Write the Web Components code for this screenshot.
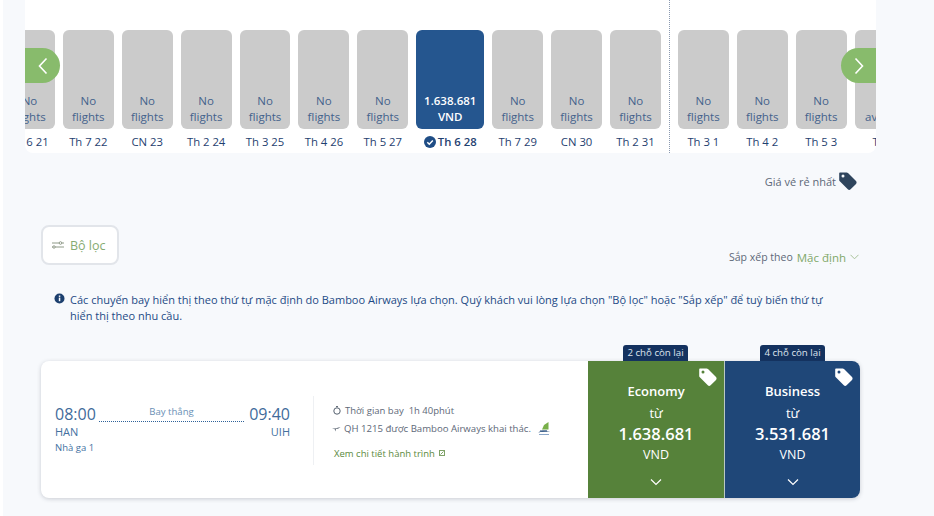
<!DOCTYPE html>
<html lang="vi">
<head>
<meta charset="utf-8">
<title>Chọn chuyến bay</title>
<style>
  html, body { margin: 0; padding: 0; height: 516px; overflow: hidden; background: #fff; }
  body { font-family: "Open Sans", "Liberation Sans", sans-serif; }
  flight-page { height: 516px; }
</style>
</head>
<body>
<flight-page>
  <flight-calendar>
    <date-cell slot="before" label="No flights" date="Th 6 21"></date-cell>
    <date-cell slot="before" label="No flights" date="Th 7 22"></date-cell>
    <date-cell slot="before" label="No flights" date="CN 23"></date-cell>
    <date-cell slot="before" label="No flights" date="Th 2 24"></date-cell>
    <date-cell slot="before" label="No flights" date="Th 3 25"></date-cell>
    <date-cell slot="before" label="No flights" date="Th 4 26"></date-cell>
    <date-cell slot="before" label="No flights" date="Th 5 27"></date-cell>
    <date-cell slot="before" label="1.638.681 VND" date="Th 6 28" selected></date-cell>
    <date-cell slot="before" label="No flights" date="Th 7 29"></date-cell>
    <date-cell slot="before" label="No flights" date="CN 30"></date-cell>
    <date-cell slot="before" label="No flights" date="Th 2 31"></date-cell>
    <date-cell slot="after" label="No flights" date="Th 3 1"></date-cell>
    <date-cell slot="after" label="No flights" date="Th 4 2"></date-cell>
    <date-cell slot="after" label="No flights" date="Th 5 3"></date-cell>
    <date-cell slot="after" label="Not available" date="Th 6 4" wide></date-cell>
  </flight-calendar>
  <cheapest-legend></cheapest-legend>
  <filter-bar></filter-bar>
  <info-note>Các chuyến bay hiển thị theo thứ tự mặc định do Bamboo Airways lựa chọn. Quý khách vui lòng lựa chọn "Bộ lọc" hoặc "Sắp xếp" để tuỳ biến thứ tự hiển thị theo nhu cầu.</info-note>
  <flight-card>
    <fare-box name="Economy" price="1.638.681" seats="2 chỗ còn lại" color="#56823a"></fare-box>
    <fare-box name="Business" price="3.531.681" seats="4 chỗ còn lại" color="#1f4778" last></fare-box>
  </flight-card>
</flight-page>

<script>
const TAG_PATH = "M2 1.5h6.6c.5 0 1 .2 1.4.6l8 8c.8.8.8 2 0 2.8l-5.4 5.4c-.8.8-2 .8-2.8 0l-8-8c-.4-.4-.6-.9-.6-1.4V2.500c0-.6.4-1 1-1zM5 3.600a1.500 1.500 0 1 0 0 3 1.500 1.500 0 0 0 0-3z";

class FlightPage extends HTMLElement {
  constructor() {
    super();
    this.attachShadow({ mode: "open" }).innerHTML = `
      <style>
        :host { display: flex; flex-direction: column; margin-left: 3px; background: #f7f9fc; overflow: hidden; }
      </style>
      <slot></slot>`;
  }
}

class DateCell extends HTMLElement {
  constructor() {
    super();
    this.attachShadow({ mode: "open" });
  }
  connectedCallback() {
    const selected = this.hasAttribute("selected");
    const wide = selected || this.hasAttribute("wide");
    const check = selected ? `<svg width="12" height="12" viewBox="0 0 12 12"><circle cx="6" cy="6" r="6" fill="#1f4d85"/><path d="M3.300 6.200l2 2 3.500-3.700" fill="none" stroke="#fff" stroke-width="1.500"/></svg>` : "";
    this.shadowRoot.innerHTML = `
      <style>
        :host { display: flex; flex-direction: column; flex: none; width: ${wide ? 68 : 50.9}px; }
        .box {
          height: 99px; box-sizing: border-box; padding: 0 0 4px; border-radius: 6px;
          background: ${selected ? "#25568f" : "#cbcbcb"};
          color: ${selected ? "#fff" : "#44628c"};
          font-weight: ${selected ? 600 : 400};
          font-size: 11.500px; line-height: 16px; text-align: center;
          display: flex; align-items: flex-end; justify-content: center;
        }
        .date {
          margin-top: 4px; height: 17px; font-size: 11.300px; line-height: 17px; color: #1f4170;
          white-space: nowrap; display: flex; justify-content: center; align-items: center; gap: 2px;
          font-weight: ${selected ? 600 : 400};
        }
      </style>
      <div class="box"><span>${this.getAttribute("label")}</span></div>
      <div class="date">${check}<span>${this.getAttribute("date")}</span></div>`;
  }
}

class FlightCalendar extends HTMLElement {
  constructor() {
    super();
    this.attachShadow({ mode: "open" }).innerHTML = `
      <style>
        :host { display: block; position: relative; width: 851px; height: 153px; margin-left: 22px; background: #fff; border-radius: 0 0 8px 8px; overflow: hidden; box-sizing: border-box; padding-top: 30px; }
        .row { display: flex; margin-left: -21px; height: 123px; }
        .group { display: flex; gap: 8px; flex: none; }
        .divider { flex: none; width: 0; margin: -30px 8px 0 8px; border-left: 1px dotted #8a99b0; height: 153px; }
        .nav {
          position: absolute; top: 48px; width: 35px; height: 35px; background: #88bb6c;
          display: flex; align-items: center; justify-content: center;
        }
        .prev { left: 0; border-radius: 0 18px 18px 0; }
        .next { right: 0; border-radius: 18px 0 0 18px; }
      </style>
      <div class="row">
        <div class="group"><slot name="before"></slot></div>
        <div class="divider"></div>
        <div class="group"><slot name="after"></slot></div>
      </div>
      <div class="nav prev"><svg width="12" height="18" viewBox="0 0 12 18"><path d="M9.500 1.500L2.500 9l7 7.500" fill="none" stroke="#fff" stroke-width="1.600"/></svg></div>
      <div class="nav next"><svg width="12" height="18" viewBox="0 0 12 18"><path d="M2.500 1.500L9.500 9l-7 7.500" fill="none" stroke="#fff" stroke-width="1.600"/></svg></div>`;
  }
}

class CheapestLegend extends HTMLElement {
  constructor() {
    super();
    this.attachShadow({ mode: "open" }).innerHTML = `
      <style>
        :host { display: flex; justify-content: flex-end; align-items: center; gap: 2px; height: 20px; margin: 18px 76px 0 0; font-size: 11px; color: #5d6878; }
        svg { display: block; }
      </style>
      <span>Giá vé rẻ nhất</span>
      <svg width="20" height="20" viewBox="0 0 20 20"><path fill="#2e445c" fill-rule="evenodd" d="${TAG_PATH}"/></svg>`;
  }
}

class FilterBar extends HTMLElement {
  constructor() {
    super();
    this.attachShadow({ mode: "open" }).innerHTML = `
      <style>
        :host { display: flex; justify-content: space-between; align-items: flex-end; margin: 34px 75px 0 38px; }
        .btn {
          width: 78px; height: 40px; box-sizing: border-box; border: 2px solid #e2e5ea; border-radius: 8px; background: #fff;
          display: flex; align-items: center; gap: 6px; padding-left: 9px; color: #86ab72; font-size: 12.500px;
        }
        .sort { display: flex; align-items: center; height: 16px; font-size: 10.500px; color: #5d6878; gap: 4px; }
        .sort b { font-weight: 400; color: #7fa868; font-size: 11.500px; }
      </style>
      <div class="btn">
        <svg width="12" height="8" viewBox="0 0 12 8"><g fill="none" stroke="#8f9a88"><path d="M0 2h7M10 2h2M3 6h9M0 6h1"/><circle cx="8.500" cy="2" r="1.300"/><circle cx="2" cy="6" r="1.200"/></g></svg>
        <span>Bộ lọc</span>
      </div>
      <div class="sort">
        <span>Sắp xếp theo</span><b>Mặc định</b>
        <svg width="9" height="6" viewBox="0 0 9 6"><path d="M.5 .8l4 4 4-4" fill="none" stroke="#a9c39a"/></svg>
      </div>`;
  }
}

class InfoNote extends HTMLElement {
  constructor() {
    super();
    this.attachShadow({ mode: "open" }).innerHTML = `
      <style>
        :host { display: flex; gap: 5px; margin: 27px 0 0 51px; width: 782px; font-size: 11px; line-height: 16px; color: #1d4a85; font-weight: 500; }
        svg { flex: none; margin-top: 1px; }
      </style>
      <svg width="11" height="11" viewBox="0 0 11 11"><circle cx="5.500" cy="5.500" r="5" fill="#1c3f6e"/><rect x="4.800" y="4.600" width="1.500" height="3.600" fill="#fff"/><rect x="4.800" y="2.500" width="1.500" height="1.400" fill="#fff"/></svg>
      <span><slot></slot></span>`;
  }
}

class FareBox extends HTMLElement {
  constructor() {
    super();
    this.attachShadow({ mode: "open" });
  }
  connectedCallback() {
    const last = this.hasAttribute("last");
    this.shadowRoot.innerHTML = `
      <style>
        :host {
          display: flex; flex-direction: column; align-items: center; position: relative; flex: none; width: 136px; box-sizing: border-box;
          background: ${this.getAttribute("color")}; color: #fff; padding-top: 20px;
          border-radius: ${last ? "0 8px 8px 0" : "0"};
          ${last ? "border-left: 1px solid #b9c8c4;" : ""}
        }
        .seats {
          position: absolute; top: -16px; left: 35px; width: 65px; height: 16px; box-sizing: border-box; border-radius: 3px 3px 0 0;
          background: #14325f; font-size: 9.700px; line-height: 16px; text-align: center; white-space: nowrap; color: #dfe5ee;
        }
        .tag { position: absolute; top: 6px; right: 6px; }
        .name { font-size: 13px; line-height: 20px; font-weight: 600; }
        .from { font-size: 13px; line-height: 18px; margin-top: 3px; }
        .price { font-size: 16.500px; line-height: 24px; font-weight: 600; margin-top: 0; }
        .cur { font-size: 12.500px; line-height: 18px; margin-top: 0; }
        svg.down { margin-top: 14px; }
      </style>
      <div class="seats">${this.getAttribute("seats")}</div>
      <svg class="tag" width="20" height="20" viewBox="0 0 20 20"><path fill="#fff" fill-rule="evenodd" d="${TAG_PATH}"/></svg>
      <div class="name">${this.getAttribute("name")}</div>
      <div class="from">từ</div>
      <div class="price">${this.getAttribute("price")}</div>
      <div class="cur">VND</div>
      <svg class="down" width="12" height="8" viewBox="0 0 12 8"><path d="M1 1.500l5 5 5-5" fill="none" stroke="#fff" stroke-width="1.200"/></svg>`;
  }
}

class FlightCard extends HTMLElement {
  constructor() {
    super();
    this.attachShadow({ mode: "open" }).innerHTML = `
      <style>
        :host {
          display: flex; width: 819px; height: 137px; margin: 37px 0 0 38px; background: #fff; border-radius: 8px;
          box-shadow: 0 1px 4px rgba(40,50,70,.22);
        }
        .route { flex: none; width: 235px; margin-left: 14px; padding-top: 41px; box-sizing: border-box; color: #44719f; }
        .times { display: flex; align-items: flex-end; gap: 3px; }
        .time { font-size: 16px; line-height: 24px; color: #3f6b9b; }
        .line { flex: 1; border-bottom: 1px dotted #2f6299; font-size: 9.600px; line-height: 12px; text-align: center; color: #6a8fb5; padding-bottom: 3px; margin: 0 2px 4px 0; }
        .codes { display: flex; justify-content: space-between; font-size: 11px; line-height: 14px; margin-top: -1px; }
        .term { font-size: 9.500px; line-height: 16px; margin-top: 1px; }
        .detail {
          flex: none; width: 275px; margin: 35px 0 0 23px; height: 69px; box-sizing: border-box; border-left: 1px solid #eef0f3; padding: 5px 0 0 19px;
          font-size: 9.500px; color: #5d6878;
        }
        .detail div { display: flex; align-items: center; white-space: nowrap; }
        .dur { height: 18px; gap: 4px; }
        .no { height: 19px; gap: 3px; margin-left: -1px; font-size: 9.600px; }
        .more { margin: 5px 0 0 1px; height: 20px; gap: 4px; color: #5c8a40; font-weight: 500; }
        .fares { display: flex; flex: none; margin-left: auto; }
      </style>
      <div class="route">
        <div class="times">
          <span class="time">08:00</span>
          <span class="line">Bay thẳng</span>
          <span class="time">09:40</span>
        </div>
        <div class="codes"><span>HAN</span><span>UIH</span></div>
        <div class="term">Nhà ga 1</div>
      </div>
      <div class="detail">
        <div class="dur">
          <svg width="8" height="9" viewBox="0 0 8 9"><circle cx="4" cy="5" r="3.200" fill="none" stroke="#55606e"/><path d="M3 .6h2" stroke="#55606e"/></svg>
          <span>Thời gian bay&nbsp; 1h 40phút</span>
        </div>
        <div class="no">
          <svg width="9" height="7" viewBox="0 0 9 7"><path d="M0 3.200l3 .3L8.500 2 6 3.800H4L3.300 6.500 2.800 4.200z" fill="#55606e"/></svg>
          <span>QH 1215 được Bamboo Airways khai thác.</span>
          <svg style="margin-left:3px" width="14" height="14" viewBox="0 0 14 14"><path d="M11.500 0L7 3 5 7.500h6.500z" fill="#79b04a"/><path d="M1 10.500c3-2.200 9-2.400 12-.5-4-.7-8-.5-12 .5z" fill="#1f4778"/><path d="M3 8.500h7v1H3z" fill="#1f4778"/><path d="M2 12.500h10" stroke="#8aa6c8" stroke-width="1"/></svg>
        </div>
        <div class="more">
          <span>Xem chi tiết hành trình</span>
          <svg width="6" height="6" viewBox="0 0 6 6"><rect x=".5" y=".5" width="5" height="5" fill="none" stroke="#7fa268"/><path d="M1.500 4.500l3-3" stroke="#7fa268"/></svg>
        </div>
      </div>
      <div class="fares"><slot></slot></div>`;
  }
}

customElements.define("flight-page", FlightPage);
customElements.define("date-cell", DateCell);
customElements.define("flight-calendar", FlightCalendar);
customElements.define("cheapest-legend", CheapestLegend);
customElements.define("filter-bar", FilterBar);
customElements.define("info-note", InfoNote);
customElements.define("fare-box", FareBox);
customElements.define("flight-card", FlightCard);
</script>
</body>
</html>
